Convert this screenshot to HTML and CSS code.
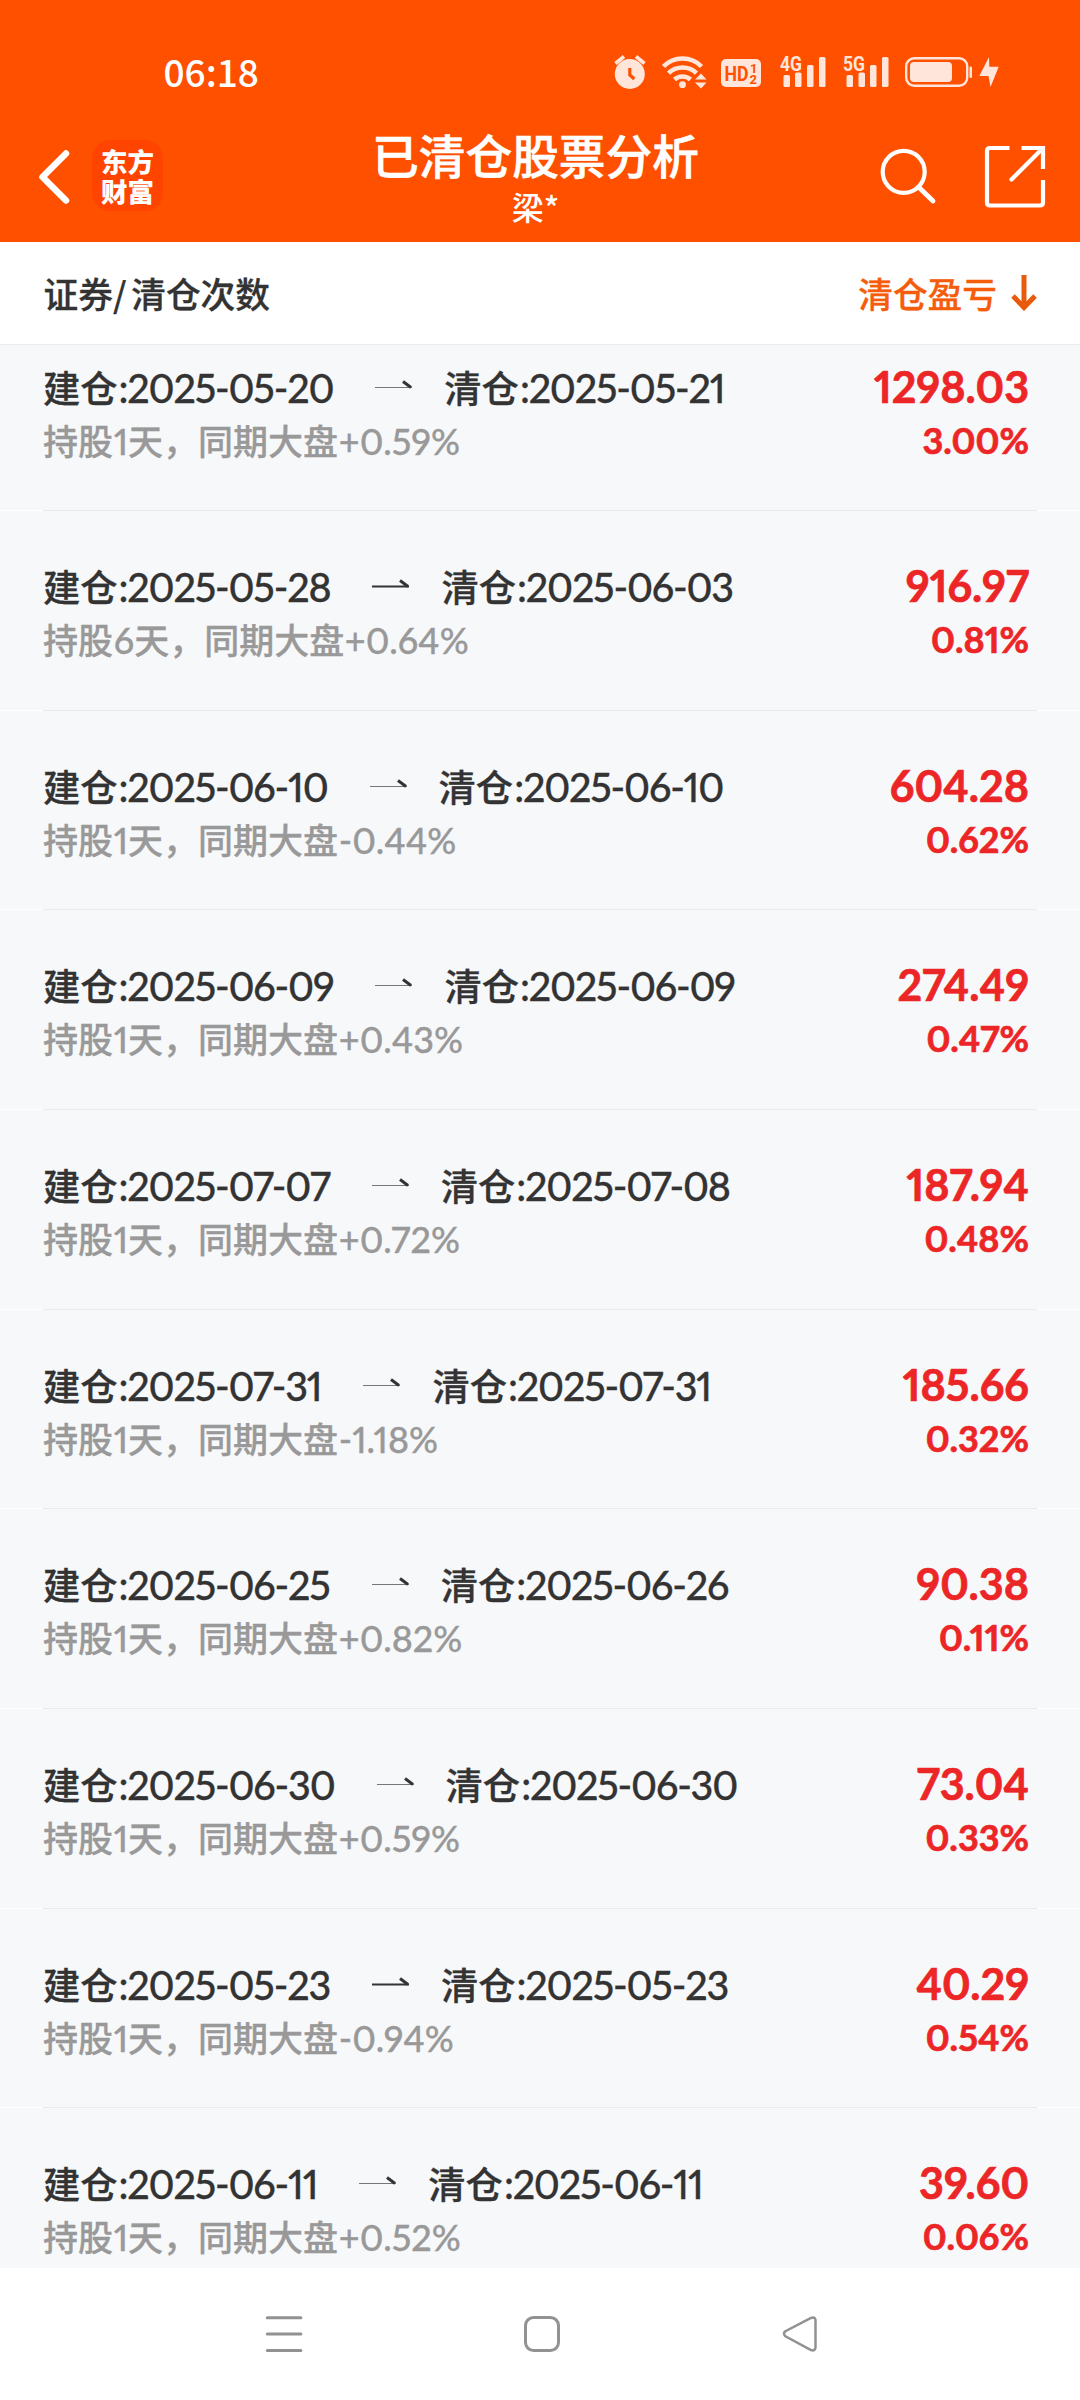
FILE: index.html
```html
<!DOCTYPE html>
<html lang="zh-CN">
<head>
<meta charset="utf-8">
<title>已清仓股票分析</title>
<link rel="stylesheet" href="styles.css">
</head>
<body>
<div class="screen">
  <header class="top">
    <div class="status">
      <span class="clock">06:18</span>
      <svg class="status-icons" width="390" height="40" viewBox="612 52 390 40">
        <g fill="#ffe5da">
          <circle cx="629.8" cy="74" r="15"/>
          <path d="M615.5 63.5l8.5-7M644.5 63.5l-8.500-7" stroke="#ffe5da" stroke-width="3.600"/>
          <path d="M629.800 68v7l4.500 4" fill="none" stroke="#ff5000" stroke-width="3.200"/>
          <path d="M663.500 66.500a26.500 26.500 0 0 1 38 0M668.500 73.200a20 20 0 0 1 28 0M674.500 79.500a12 12 0 0 1 16 0" fill="none" stroke="#ffe5da" stroke-width="4.600"/>
          <circle cx="682.500" cy="84.700" r="3.400"/>
          <path d="M693 81v-3l7-6h8v18h-8l-7-6z" fill="#ff5000"/>
          <path d="M695 79.500l6-6 5.500 6zM695 82.500l6 6 5.500-6z"/>
          <rect x="721" y="59" width="40" height="28" rx="5"/>
          <rect x="783.500" y="75" width="6.500" height="12" rx="1.500"/><rect x="795" y="72.500" width="6.500" height="14.500" rx="1.500"/><rect x="807" y="65" width="6.500" height="22" rx="1.500"/><rect x="819" y="57" width="6.500" height="30" rx="1.500"/>
          <rect x="846.500" y="75" width="6.500" height="12" rx="1.500"/><rect x="858.500" y="72.500" width="6.500" height="14.500" rx="1.500"/><rect x="870" y="65" width="6.500" height="22" rx="1.500"/><rect x="882" y="57" width="6.500" height="30" rx="1.500"/>
          <rect x="906.200" y="58.200" width="61" height="27.600" rx="8" fill="none" stroke="#ffe5da" stroke-width="2.400"/>
          <rect x="910" y="62" width="42" height="20" rx="4"/>
          <rect x="969.500" y="66.500" width="2.500" height="11.500" rx="1.200"/>
          <path d="M989 57l-9.700 19h9.200l2 11 8.200-20.200h-9.400z"/>
        </g>
        <g class="net">
          <text x="780" y="70.500" textLength="22" lengthAdjust="spacingAndGlyphs">4G</text>
          <text x="843" y="70.500" textLength="22" lengthAdjust="spacingAndGlyphs">5G</text>
        </g>
        <g class="hd">
          <text x="724.500" y="80.500" textLength="24" lengthAdjust="spacingAndGlyphs">HD</text>
          <text class="sim" x="750" y="73">1</text>
          <text class="sim" x="749.500" y="83.500">2</text>
        </g>
      </svg>
    </div>
    <div class="bar">
      <svg class="back" width="36" height="60" viewBox="36 147 36 60"><path d="M66 153.500L42.500 177l23.500 23.500" fill="none" stroke="#fff" stroke-width="6.500" stroke-linecap="round" stroke-linejoin="round"/></svg>
      <div class="logo"><span>东方</span><span>财富</span></div>
      <div class="titles"><h1>已清仓股票分析</h1><p>梁*</p></div>
      <svg class="tools" width="170" height="70" viewBox="878 142 170 70" fill="none" stroke="#fff" stroke-width="4.200">
        <circle cx="903.700" cy="171.800" r="21"/>
        <path d="M918.500 187l14.500 14" stroke-width="4.800" stroke-linecap="round"/>
        <path d="M1009.500 148h-19.500q-3 0-3 3v51.500q0 3 3 3h50q3 0 3-3V180M1021.500 148h21.500v21"/>
        <path d="M1042 149l-30.500 30.500" stroke-linecap="round"/>
      </svg>
    </div>
  </header>

  <div class="heads">
    <span>证券/ 清仓次数</span>
    <span class="sort">清仓盈亏<svg width="26" height="36" viewBox="0 0 26 36" fill="none" stroke="#e85a0c" stroke-width="5"><path d="M13 0v32M2 21L13 32.500 24 21"/></svg></span>
  </div>

  <main class="list" id="list"></main>

  <nav class="nav">
    <svg width="38" height="38" viewBox="265 2315 38 38" stroke="#929292" stroke-width="3" stroke-linecap="round"><path d="M267.300 2317.700h33.600M267.300 2334h33.600M267.300 2350.500h33.600"/></svg>
    <svg width="38" height="38" viewBox="523 2315 38 38" fill="none" stroke="#929292" stroke-width="3"><rect x="525.500" y="2317.500" width="33" height="33" rx="8"/></svg>
    <svg width="38" height="38" viewBox="781 2315 38 38" fill="none" stroke="#929292" stroke-width="2.500"><path d="M785 2331.500q-2 2 0 4.500L811 2350q4 1.500 4.500-2.500V2320q-.5-3.500-4.500-2z"/></svg>
  </nav>
</div>
<script src="rows.js"></script>
</body>
</html>
```
FILE: rows.js
```javascript
// open date, close date, days held, market change, profit, profit rate
const trades = [
  ['2025-05-20', '2025-05-21', 1, '+0.59%', '1298.03', '3.00%'],
  ['2025-05-28', '2025-06-03', 6, '+0.64%', '916.97', '0.81%'],
  ['2025-06-10', '2025-06-10', 1, '-0.44%', '604.28', '0.62%'],
  ['2025-06-09', '2025-06-09', 1, '+0.43%', '274.49', '0.47%'],
  ['2025-07-07', '2025-07-08', 1, '+0.72%', '187.94', '0.48%'],
  ['2025-07-31', '2025-07-31', 1, '-1.18%', '185.66', '0.32%'],
  ['2025-06-25', '2025-06-26', 1, '+0.82%', '90.38', '0.11%'],
  ['2025-06-30', '2025-06-30', 1, '+0.59%', '73.04', '0.33%'],
  ['2025-05-23', '2025-05-23', 1, '-0.94%', '40.29', '0.54%'],
  ['2025-06-11', '2025-06-11', 1, '+0.52%', '39.60', '0.06%']
];
const arrow = '<svg class="arrow" width="38" height="10" viewBox="0 0 38 10"><path class="shaft" d="M0 7.500h37"/><path class="barb" d="M28 1.500l8 6"/></svg>';
document.getElementById('list').innerHTML = trades.map(([open, close, days, market, profit, rate]) => `
  <section class="row">
    <div class="dates"><span>建仓<b>:${open}</b></span>${arrow}<span>清仓<b>:${close}</b></span></div>
    <div class="profit">${profit}</div>
    <div class="note">持股<b>${days}</b>天，同期大盘<b>${market}</b></div>
    <div class="rate">${rate}</div>
  </section>`).join('');
```
FILE: styles.css
```css
* { box-sizing: border-box; }
body { margin: 0; background: #fff; font-family: "Noto Sans CJK SC", sans-serif; font-weight: 500; color: #333; }
svg { display: block; flex: none; }
.screen { width: 1080px; height: 2400px; display: flex; flex-direction: column; overflow: hidden; }

.top { height: 242px; background: #ff5000; color: #fff; flex: none; }
.status { height: 112px; padding: 52px 78px 0 163.5px; display: flex; justify-content: space-between; }
.clock { font-size: 37px; line-height: 39px; }
.status-icons text { font-family: Roboto, sans-serif; font-weight: 700; }
.net text { font-size: 21px; fill: #ffe5da; }
.hd text { font-size: 21px; fill: #ff5000; }
.hd .sim { font-size: 13px; }

.bar { height: 130px; display: grid; grid-template-columns: 56px 71px 1fr 170px; padding: 0 32px 0 36px; }
.back { margin-top: 35px; }
.logo { width: 71px; height: 71px; margin-top: 28px; border-radius: 18px; background: #ff4400; display: flex; flex-direction: column; align-items: center; justify-content: center; font-weight: 900; font-size: 26.500px; line-height: 30px; }
.titles { text-align: center; padding-top: 16px; margin-left: -70px; margin-right: -100px; }
.titles h1 { margin: 0; font-size: 46.700px; line-height: 52px; font-weight: 500; -webkit-text-stroke: .6px; }
.titles p { margin: 8px 0 0; font-size: 32px; line-height: 36px; }
.tools { margin-top: 30px; }

.heads { height: 103px; flex: none; border-bottom: 1px solid #ebebeb; padding: 0 43px 0 43.5px; display: flex; justify-content: space-between; align-items: center; font-size: 34.700px; line-height: 50px; word-spacing: -3px; -webkit-text-stroke: .3px; }
.sort { color: #f55c0c; display: flex; align-items: center; gap: 14px; }

.list { height: 1923px; flex: none; overflow: hidden; background: #f7f8fa; -webkit-text-stroke: .3px; }
.list b, .profit, .rate { font-family: Lato, sans-serif; font-feature-settings: "pnum"; }
.row { height: 199.670px; padding: 49px 51px 0 43px; display: grid; grid-template-columns: auto auto; grid-template-rows: 52px 54px; justify-content: space-between; background: linear-gradient(#ebebec, #ebebec) 43px 100% / 994px 1px no-repeat, linear-gradient(#fff, #fff) 0 100% / 100% 1px no-repeat; }
.row:first-child { margin-top: -33.500px; }
.dates { display: flex; font-size: 37.300px; line-height: 52px; white-space: nowrap; }
.dates b { font-size: 39.500px; font-weight: 500; letter-spacing: -1.200px; margin-left: 1px; }
.dates b::first-letter { letter-spacing: 0; }
.arrow { margin: 19px 31px 0 42px; fill: none; stroke: #333; }
.shaft { stroke-width: 1; stroke: #777; }
.barb { stroke-width: 3; }
.row:nth-child(7n+2) .shaft { stroke-width: 2; stroke: #333; }
.note { font-size: 35px; line-height: 54px; color: #999; white-space: nowrap; }
.note b { font-size: 36px; font-weight: 500; margin-left: .7px; }
.profit, .rate { text-align: right; color: #ec2626; font-weight: 700; -webkit-text-stroke: .7px; }
.profit { font-size: 43px; line-height: 52px; }
.rate { font-size: 36px; line-height: 54px; }

.nav { flex: 1; display: flex; justify-content: space-between; padding: 47px 261px 0 265px; }
```
